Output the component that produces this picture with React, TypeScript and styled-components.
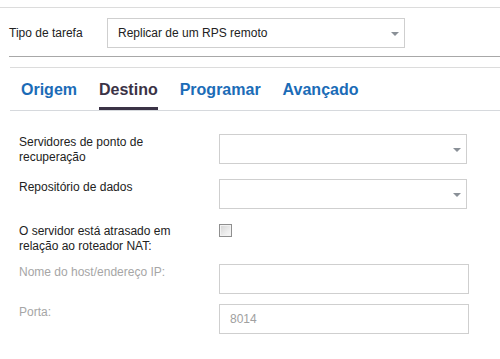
import React from "react";
import styled, { createGlobalStyle } from "styled-components";

const Global = createGlobalStyle`
  html, body { margin: 0; padding: 0; background: #fff; }
  body { font-family: "Liberation Sans", Arial, sans-serif; font-size: 12px; color: #222; }
`;

const Page = styled.div`
  width: 500px;
  height: 359px;
  padding-top: 7px;
  box-sizing: border-box;
  overflow: hidden;
`;

const TopRule = styled.div`
  height: 1px;
  background: #dcdcdc;
`;

const Header = styled.div`
  display: flex;
  align-items: center;
  padding: 10px 0 8px 9px;
`;

const HeaderLabel = styled.label`
  width: 98px;
  line-height: 15px;
  color: #222;
`;

const SelectBox = styled.div<{ $w: number }>`
  box-sizing: border-box;
  width: ${(p) => p.$w}px;
  height: 30px;
  border: 1px solid #cfcfcf;
  background: #fff;
  display: flex;
  align-items: center;
  justify-content: space-between;
  padding: 0 5px 0 10px;
  color: #222;
`;

const Arrow = styled.span`
  width: 0;
  height: 0;
  border-left: 4px solid transparent;
  border-right: 4px solid transparent;
  border-top: 4px solid #8a9097;
  margin-top: 1px;
`;

const Divider = styled.div<{ $indent: number; $color: string }>`
  height: 1px;
  margin-left: ${(p) => p.$indent}px;
  background: ${(p) => p.$color};
`;

const TabBar = styled.div`
  margin: 10px 0 0 10px;
  border-top: 1px solid #dcdcdc;
  border-bottom: 1px solid #d6d9dd;
  display: flex;
  align-items: flex-end;
  gap: 22px;
  padding-left: 11px;
`;

const Tab = styled.div<{ $active?: boolean }>`
  font-size: 16px;
  font-weight: bold;
  line-height: 20px;
  padding: 12px 0 7px;
  border-bottom: 3px solid ${(p) => (p.$active ? "#3b3346" : "transparent")};
  color: ${(p) => (p.$active ? "#3b3346" : "#1b6cb7")};
`;

const Form = styled.div`
  padding: 23px 0 0 19px;
`;

const Row = styled.div<{ $mt: number }>`
  display: grid;
  grid-template-columns: 200px auto;
  align-items: start;
  margin-top: ${(p) => p.$mt}px;
`;

const Label = styled.label<{ $disabled?: boolean }>`
  padding-top: 1px;
  line-height: 15px;
  color: ${(p) => (p.$disabled ? "#a6a6a6" : "#222")};
`;

const Input = styled.div`
  box-sizing: border-box;
  width: 250px;
  height: 30px;
  border: 1px solid #cfcfcf;
  display: flex;
  align-items: center;
  padding-left: 10px;
  color: #a0a0a0;
`;

const Checkbox = styled.span`
  box-sizing: border-box;
  display: block;
  width: 13px;
  height: 13px;
  margin-top: 1px;
  border: 1px solid #8f8f8f;
  box-shadow: inset 0 0 0 1px #f2f2f2;
  background: linear-gradient(135deg, #d4d4d4 0%, #ececec 60%, #f8f8f8 100%);
`;

export default function App() {
  return (
    <>
      <Global />
      <Page>
        <TopRule />
        <Header>
          <HeaderLabel>Tipo de tarefa</HeaderLabel>
          <SelectBox $w={298}>
            <span>Replicar de um RPS remoto</span>
            <Arrow />
          </SelectBox>
        </Header>
        <Divider $indent={9} $color="#a8a8a8" />
        <TabBar>
          <Tab>Origem</Tab>
          <Tab $active>Destino</Tab>
          <Tab>Programar</Tab>
          <Tab>Avançado</Tab>
        </TabBar>
        <Form>
          <Row $mt={0}>
            <Label>
              Servidores de ponto de
              <br />
              recuperação
            </Label>
            <SelectBox $w={248}>
              <span />
              <Arrow />
            </SelectBox>
          </Row>
          <Row $mt={14}>
            <Label>Repositório de dados</Label>
            <SelectBox $w={248}>
              <span />
              <Arrow />
            </SelectBox>
          </Row>
          <Row $mt={14}>
            <Label>
              O servidor está atrasado em
              <br />
              relação ao roteador NAT:
            </Label>
            <Checkbox />
          </Row>
          <Row $mt={10}>
            <Label $disabled>Nome do host/endereço IP:</Label>
            <Input />
          </Row>
          <Row $mt={10}>
            <Label $disabled>Porta:</Label>
            <Input>8014</Input>
          </Row>
        </Form>
      </Page>
    </>
  );
}
